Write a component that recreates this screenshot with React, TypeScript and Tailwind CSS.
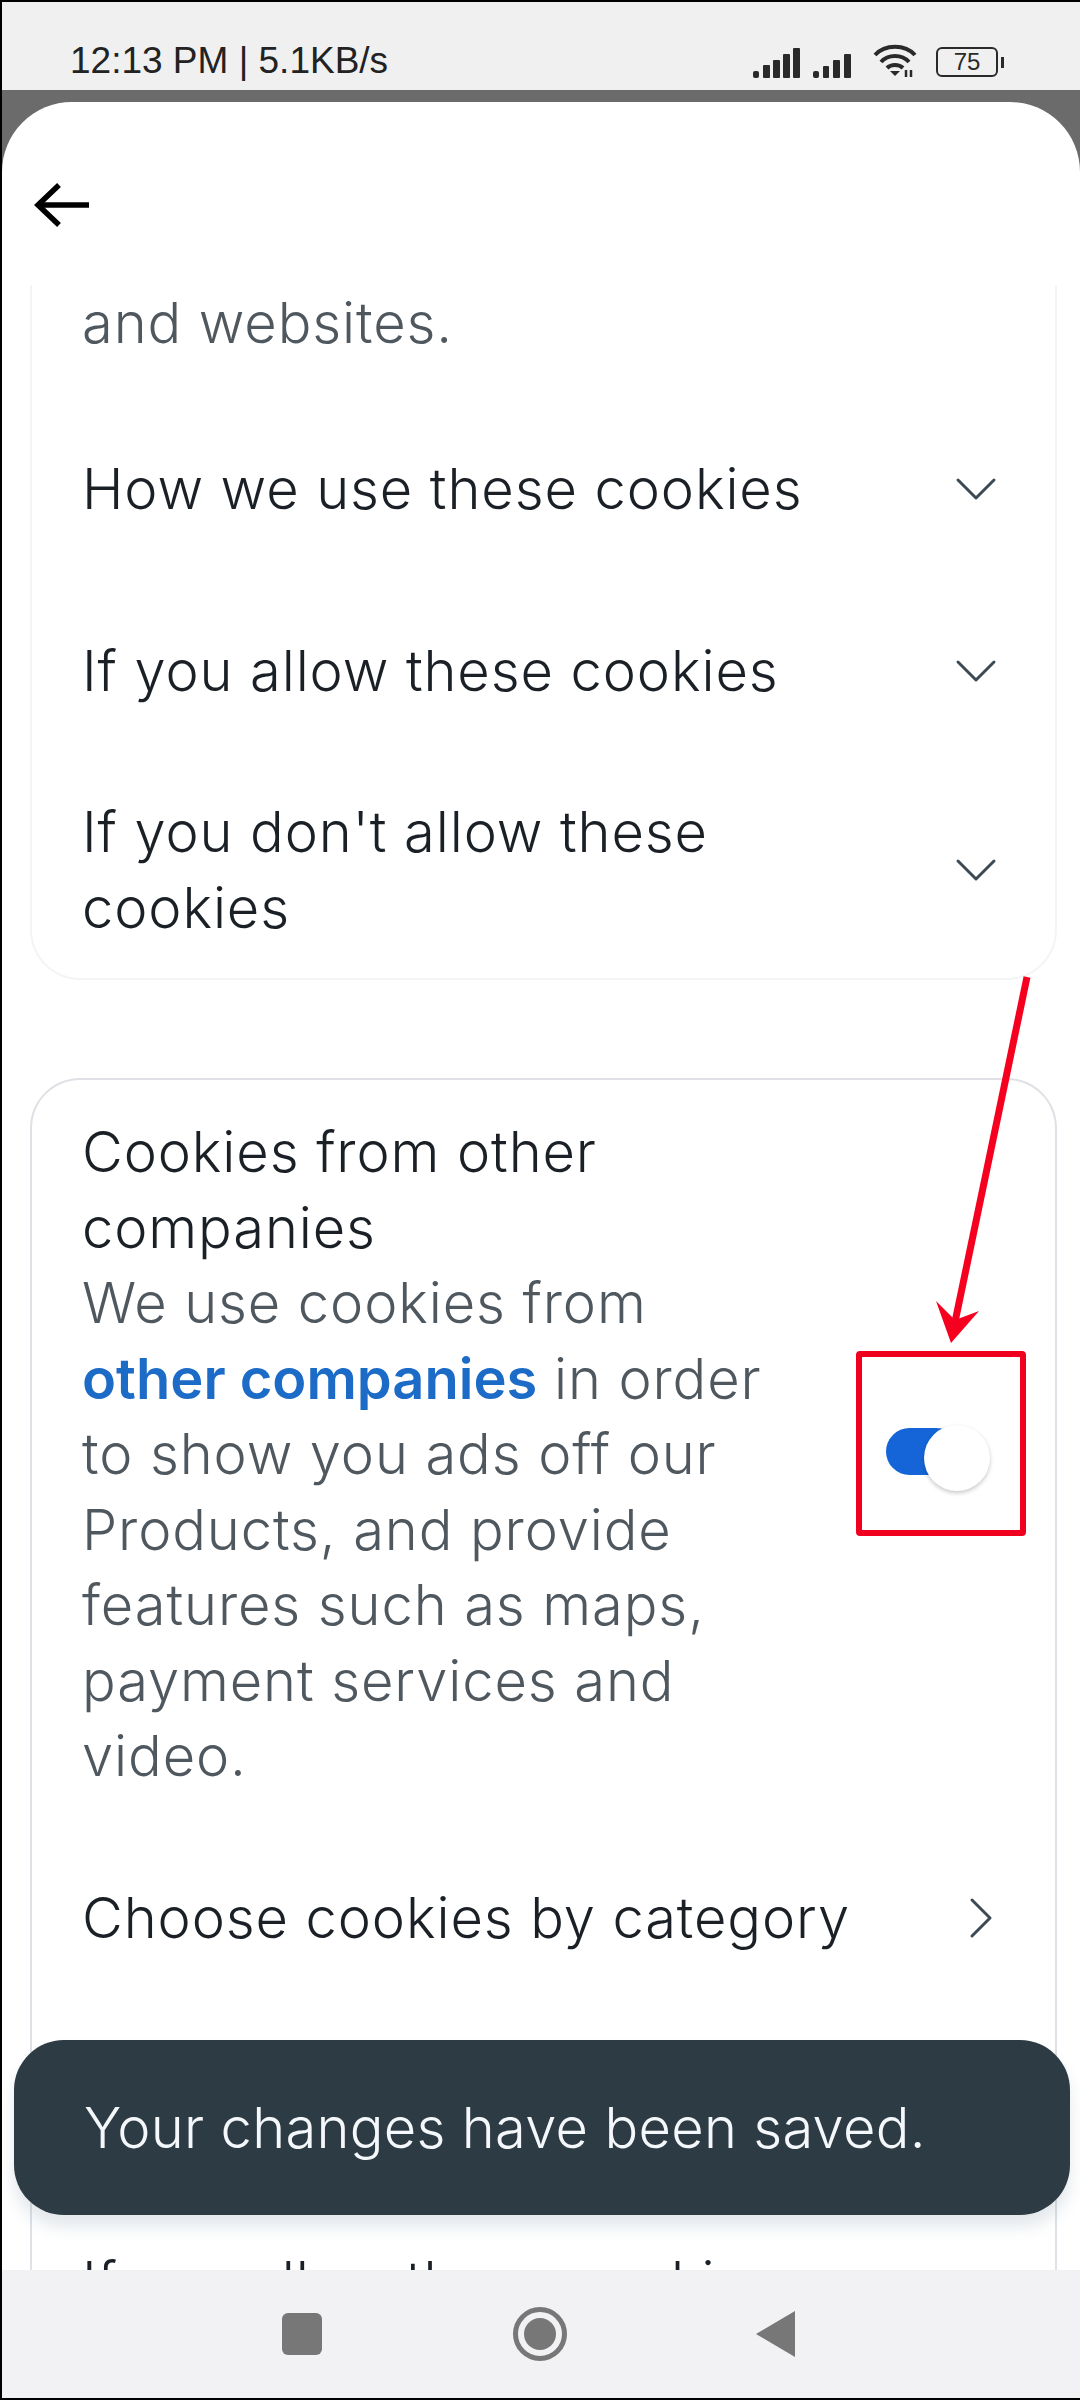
import { ChevronDown, ChevronRight } from 'lucide-react';

const font = { fontFamily: 'Inter, "Noto Sans", sans-serif' };

function Row({ label, right = false, tall = false }: { label: string; right?: boolean; tall?: boolean }) {
  return (
    <div className={`flex items-center justify-between pl-[50px] ${right ? 'pr-[38px]' : 'pr-[43px]'} ${tall ? 'h-[216px]' : 'h-[182px]'}`}>
      <span className={`text-[56px] leading-[76px] font-light tracking-[0.9px] text-[#1a2026] ${tall ? 'w-[760px]' : ''}`}>{label}</span>
      {right ? (
        <ChevronRight className="h-[72px] w-[72px] shrink-0 text-[#3b4a54]" strokeWidth={1} aria-hidden="true" />
      ) : (
        <ChevronDown className="h-[72px] w-[72px] shrink-0 text-[#3b4a54]" strokeWidth={1} aria-hidden="true" />
      )}
    </div>
  );
}

function StatusIcons() {
  return (
    <div className="flex items-end">
      <svg width="48" height="32" viewBox="0 0 48 32" fill="#2a2a2a" aria-hidden="true">
        <rect x="0" y="24" width="6" height="7" rx="2" />
        <rect x="10" y="18" width="7" height="13" rx="1" />
        <rect x="20" y="13" width="7" height="18" rx="1" />
        <rect x="30" y="7" width="7" height="24" rx="1" />
        <rect x="40" y="1" width="7" height="30" rx="1" />
      </svg>
      <svg width="40" height="26" viewBox="0 0 40 26" fill="#2a2a2a" className="ml-[12px]" aria-hidden="true">
        <rect x="0" y="18" width="6" height="7" rx="2" />
        <rect x="10" y="13" width="6" height="12" rx="1" />
        <rect x="20" y="7" width="7" height="18" rx="1" />
        <rect x="31" y="1" width="7" height="24" rx="1" />
      </svg>
      <svg width="48" height="36" viewBox="0 0 48 36" fill="none" stroke="#2a2a2a" strokeWidth="4" className="ml-[20px]" aria-hidden="true">
        <path d="M2 12C12 1 32 1 42 12" />
        <path d="M8 19C15 11 29 11 36 19" />
        <path d="M14 25C18 21 26 21 30 25" />
        <path d="M17 28h10l-5 5z" fill="#2a2a2a" stroke="none" />
        <path d="M33 27v7M38 27v7" strokeWidth="2.5" />
      </svg>
      <div className="ml-[15px] flex items-center gap-[3px] pb-[2px]">
        <div className="flex h-[30px] w-[62px] items-center justify-center rounded-[6px] border-2 border-[#2a2a2a] text-[24px] leading-none text-[#2a2a2a]" style={{ fontFamily: '"Liberation Sans", sans-serif' }}>
          75
        </div>
        <div className="h-[11px] w-[3px] bg-[#2a2a2a]" />
      </div>
    </div>
  );
}

export default function App() {
  return (
    <div className="relative flex h-[2400px] w-[1080px] flex-col overflow-hidden border-t-[2px] border-l-[2px] border-t-black border-l-black bg-[#6b6b6b]" style={font}>
      <div className="flex h-[88px] shrink-0 items-start justify-between bg-[#f0f0f0] pt-[41px] pr-[76px] pl-[68px]">
        <span className="text-[37px] leading-[36px] text-[#222]" style={{ fontFamily: '"Liberation Sans", sans-serif' }}>
          12:13 PM | 5.1KB/s
        </span>
        <StatusIcons />
      </div>

      <div className="mt-[12px] flex min-h-0 flex-1 flex-col overflow-hidden rounded-t-[70px] bg-white">
        <div className="flex h-[183px] shrink-0 items-start pt-[81px] pl-[32px]">
          <svg width="56" height="44" viewBox="0 0 56 44" fill="none" stroke="#000" strokeWidth="5.5" aria-hidden="true">
            <path d="M55 22H5" />
            <path d="M25 2L4 22l21 20" />
          </svg>
        </div>

        <div className="flex flex-col pr-[23px] pl-[28px]">
          <div className="rounded-b-[50px] border-x-2 border-b-2 border-[#f3f4f6]">
            <p className="pb-[37px] pl-[50px] text-[56px] leading-[76px] font-light tracking-[0.9px] text-[#50585f]">and websites.</p>
            <Row label="How we use these cookies" />
            <Row label="If you allow these cookies" />
            <Row label="If you don't allow these cookies" tall />
          </div>

          <div className="mt-[98px] rounded-t-[50px] border-x-2 border-t-2 border-[#dfe1e6]">
            <div className="flex items-center pt-[35px] pb-[32px] pl-[50px]">
              <div className="w-[692px] text-[56px] leading-[75.5px] font-light tracking-[0.9px]">
                <p className="text-[#1a2026]">Cookies from other companies</p>
                <p className="text-[#50585f]">
                  We use cookies from <span className="font-semibold tracking-normal text-[#1b6bc7]">other companies</span> in order to show you ads off our Products, and provide features such as maps, payment services and video.
                </p>
              </div>
              <div className="relative mb-[6px] ml-[112px] h-[47px] w-[74px] rounded-full bg-[#1565d8]">
                <div className="absolute top-[-3px] left-[38px] h-[66px] w-[66px] rounded-full bg-white shadow-[0_2px_4px_rgba(0,0,0,0.22)]" />
              </div>
            </div>
            <Row label="Choose cookies by category" right />
            <Row label="How we use these cookies" />
            <Row label="If you allow these cookies" />
          </div>
        </div>
      </div>

      <div className="absolute top-[2038px] left-[12px] flex h-[175px] w-[1056px] items-center rounded-[50px] bg-[#2d3b45] pl-[70px] text-[56px] font-light tracking-[0.3px] text-[#f5f8fb] shadow-[0_12px_16px_rgba(60,90,120,0.14)]">
        Your changes have been saved.
      </div>

      <div className="absolute right-0 bottom-0 left-0 flex h-[130px] items-center justify-center border-b-[2px] border-b-black bg-[#f2f1f3] pr-[4px]">
        <div className="h-[42px] w-[40px] rounded-[6px] bg-[#777]" />
        <div className="ml-[191px] flex h-[54px] w-[54px] items-center justify-center rounded-full border-[5px] border-[#777]">
          <div className="h-[32px] w-[32px] rounded-full bg-[#777]" />
        </div>
        <svg width="40" height="46" viewBox="0 0 40 46" className="ml-[189px]" aria-hidden="true">
          <path d="M39 0v46L0 23z" fill="#777" />
        </svg>
      </div>

      <svg className="absolute top-[-2px] left-[-2px]" width="1080" height="2400" viewBox="0 0 1080 2400" fill="none" aria-hidden="true">
        <path d="M1027 977L955 1322" stroke="#f5001e" strokeWidth="7" />
        <path d="M951 1343L936 1301L955 1320L979 1311z" fill="#f5001e" />
      </svg>
      <div className="absolute top-[1349px] left-[854px] h-[185px] w-[170px] rounded-[4px] border-[6px] border-[#f0001e]" />
    </div>
  );
}
